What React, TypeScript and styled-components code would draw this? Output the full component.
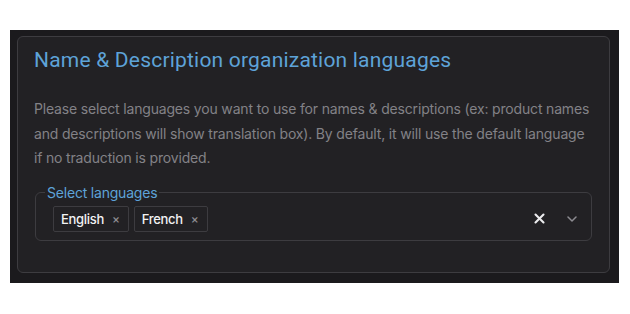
import React from "react";
import styled, { createGlobalStyle } from "styled-components";

const GlobalStyle = createGlobalStyle`
  html, body {
    margin: 0;
    padding: 0;
    background: #ffffff;
  }
  * {
    box-sizing: border-box;
  }
`;

const Frame = styled.div`
  margin: 30px 11px 0 10px;
  height: 253px;
  background: #1b1a1d;
  padding: 6px 9px 10px 7px;
`;

const Card = styled.section`
  height: 100%;
  background: #222124;
  border: 1px solid #3d3c40;
  border-radius: 6px;
  padding: 8px 17px 0 16px;
  font-family: Inter, "Noto Sans", sans-serif;
`;

const Title = styled.h2`
  margin: 0;
  font-family: Roboto, "Liberation Sans", sans-serif;
  font-weight: 400;
  font-size: 21px;
  line-height: 30px;
  letter-spacing: 0.2px;
  color: #5ea3d8;
`;

const Description = styled.p`
  margin: 22px 0 0 0;
  font-size: 14px;
  line-height: 24.5px;
  letter-spacing: -0.17px;
  color: #838287;
`;

const Field = styled.fieldset`
  margin: 13px 0 0 1px;
  border: 1px solid #3d3c40;
  border-radius: 6px;
  padding: 5px 8px 8px 9px;
  min-width: 0;
`;

const Legend = styled.legend`
  padding: 0 2px;
  font-size: 14px;
  line-height: 17px;
  letter-spacing: -0.2px;
  color: #5ea3d8;
`;

const Row = styled.div`
  display: flex;
  align-items: center;
  padding-left: 8px;
`;

const Chips = styled.div`
  display: flex;
  gap: 5px;
  flex: 1;
`;

const Chip = styled.span`
  display: inline-flex;
  align-items: center;
  gap: 8px;
  height: 26px;
  padding: 0 8px 0 7px;
  border: 1px solid #3d3c40;
  border-radius: 2px;
  font-size: 13px;
  font-weight: 500;
  letter-spacing: -0.3px;
  color: #f2f2f3;
`;

const ChipRemove = styled.span`
  font-size: 12px;
  color: #8d8c91;
  line-height: 1;
`;

const Controls = styled.div`
  display: flex;
  align-items: center;
  gap: 22px;
  padding-right: 6px;
`;

const IconBox = styled.span`
  display: inline-flex;
  align-items: center;
  justify-content: center;
`;

const languages = ["English", "French"];

export default function App() {
  return (
    <>
      <GlobalStyle />
      <Frame>
        <Card>
          <Title>Name &amp; Description organization languages</Title>
          <Description>
            Please select languages you want to use for names &amp; descriptions (ex: product names and
            descriptions will show translation box). By default, it will use the default language if no
            traduction is provided.
          </Description>
          <Field>
            <Legend>Select languages</Legend>
            <Row>
              <Chips>
                {languages.map((lang) => (
                  <Chip key={lang}>
                    {lang}
                    <ChipRemove>×</ChipRemove>
                  </Chip>
                ))}
              </Chips>
              <Controls>
                <IconBox>
                  <svg width="11" height="11" viewBox="0 0 11 11">
                    <path d="M1.5 1.5 L9.5 9.5 M9.5 1.5 L1.5 9.5" stroke="#ececee" strokeWidth="2.1" strokeLinecap="round" />
                  </svg>
                </IconBox>
                <IconBox>
                  <svg width="10" height="6" viewBox="0 0 10 6">
                    <path d="M1 1 L5 5 L9 1" stroke="#8d8c91" strokeWidth="1.5" fill="none" strokeLinecap="round" strokeLinejoin="round" />
                  </svg>
                </IconBox>
              </Controls>
            </Row>
          </Field>
        </Card>
      </Frame>
    </>
  );
}
